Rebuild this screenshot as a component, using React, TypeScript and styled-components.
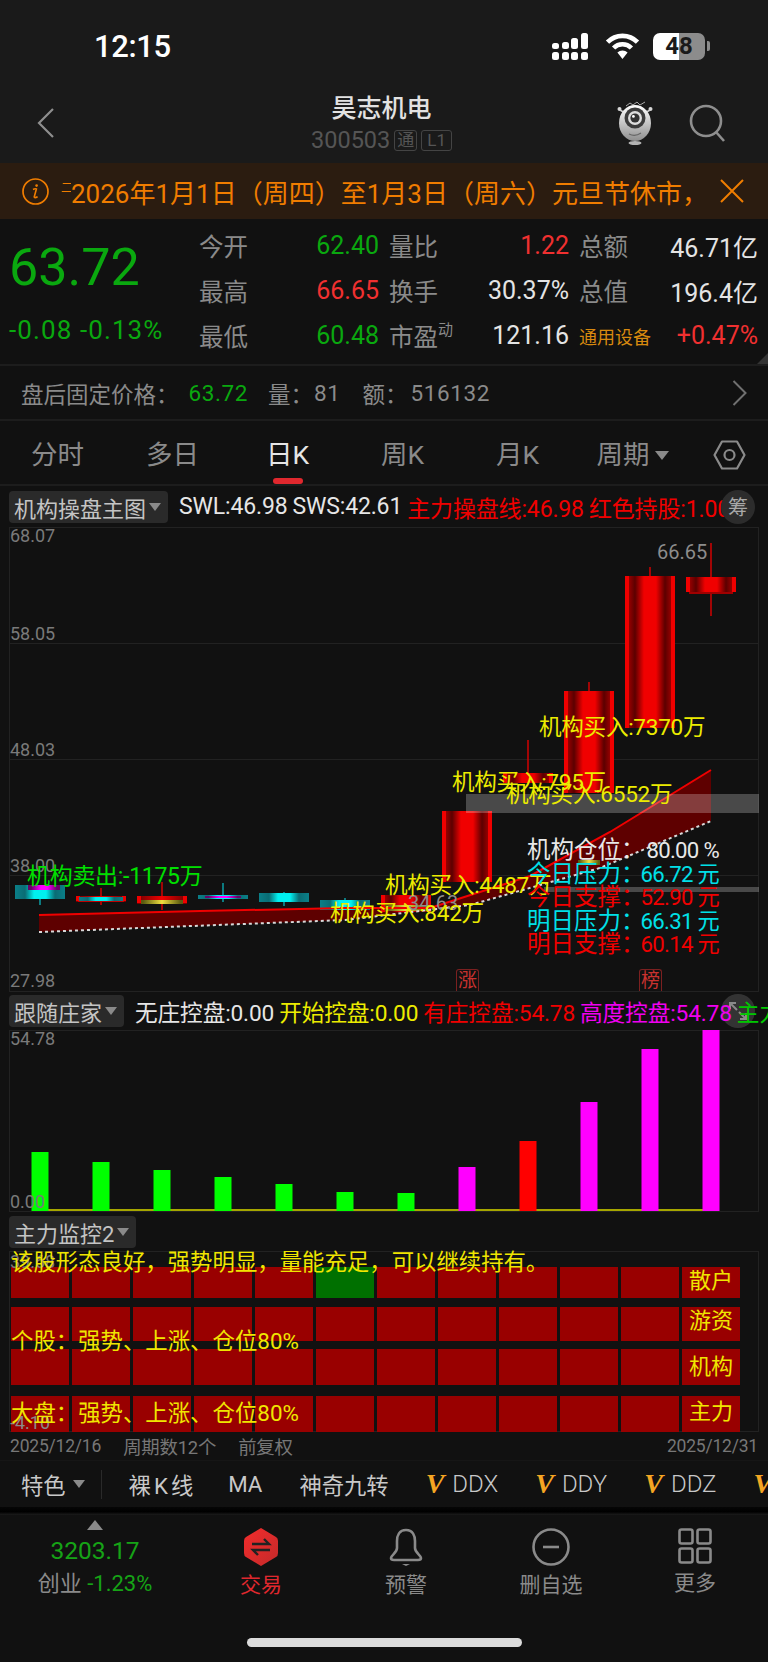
import * as React from 'react';
import styled, { createGlobalStyle } from 'styled-components';

const GlobalStyle = createGlobalStyle`
  html, body {
    margin: 0;
    background: #111111;
    overflow: hidden;
  }
  * {
    box-sizing: border-box;
  }
`;

const Page = styled.div`
  width: 768px;
  height: 1662px;
  background: #111111;
  overflow: hidden;
  font-family: Roboto, 'Noto Sans CJK SC', sans-serif;
  color: #8a8a8a;
  display: flex;
  flex-direction: column;
`;

const Top = styled.div`
  background: #1a1a1a;
  height: 163px;
  flex: none;
`;

const StatusBar = styled.div`
  height: 92px;
  padding: 0 63px 0 94px;
  display: flex;
  align-items: center;
  justify-content: space-between;
`;

const Clock = styled.div`
  color: #fff;
  font-size: 31px;
  font-weight: 500;
  letter-spacing: -0.4px;
`;

const StatusIcons = styled.div`
  display: flex;
  align-items: center;
  gap: 13px;
`;

const Battery = styled.div`
  width: 52px;
  height: 27px;
  border-radius: 7px;
  background: linear-gradient(90deg, #fff 50%, #8c8c8c 50%);
  color: #1a1a1a;
  font-size: 24px;
  font-weight: 700;
  line-height: 27px;
  text-align: center;
  position: relative;
  &::after {
    content: '';
    position: absolute;
    right: -5px;
    top: 8px;
    width: 3px;
    height: 10px;
    border-radius: 0 2px 2px 0;
    background: #8c8c8c;
  }
`;

const Header = styled.div`
  height: 71px;
  display: grid;
  grid-template-columns: 1fr auto 1fr;
  align-items: center;
  padding: 0 42px 9px 37px;
`;

const TitleBox = styled.div`
  display: flex;
  flex-direction: column;
  align-items: center;
  align-self: start;
  padding-top: 2px;
`;

const Title = styled.div`
  color: #e2e2e2;
  font-size: 25px;
  line-height: 30px;
  font-weight: 500;
`;

const Sub = styled.div`
  display: flex;
  align-items: center;
  gap: 4px;
  margin-top: 3px;
  color: #555;
  font-size: 23.5px;
  line-height: 26px;
`;

const SubBadge = styled.span<{ $wide?: boolean }>`
  border: 1px solid #444;
  border-radius: 3px;
  font-size: 17px;
  line-height: 19px;
  padding: 0 ${(p) => (p.$wide ? 5 : 2)}px;
  color: #555;
`;

const HeaderRight = styled.div`
  display: flex;
  justify-content: flex-end;
  align-items: center;
  gap: 36px;
`;

const Banner = styled.div`
  height: 56px;
  flex: none;
  background: #2b1c10;
  color: #f07d00;
  display: flex;
  align-items: center;
  padding: 0 24px 0 22px;
  font-size: 26px;
`;

const BannerClip = styled.span`
  width: 10px;
  margin: -10px 0 0 12px;
  font-size: 12px;
  overflow: hidden;
  flex: none;
`;

const BannerText = styled.span`
  flex: 1;
  white-space: nowrap;
  overflow: hidden;
`;

const Quote = styled.div`
  height: 147px;
  flex: none;
  display: flex;
  border-bottom: 2px solid #1d1d1d;
  position: relative;
`;

const PriceBox = styled.div`
  width: 199px;
  flex: none;
  padding: 19px 0 0 9px;
`;

const Price = styled.div`
  color: #0aa80f;
  font-size: 52px;
  line-height: 60px;
`;

const PriceChange = styled.div`
  margin-top: 17px;
  color: #0aa80f;
  font-size: 26px;
  letter-spacing: 1.1px;
  line-height: 30px;
  white-space: nowrap;
`;

const QuoteGrid = styled.div`
  display: grid;
  grid-template-columns: 50px 130px 60px 130px 60px 129px;
  grid-auto-rows: 45px;
  padding-top: 4px;
  align-items: center;
`;

const QuoteLabel = styled.div<{ $indent?: boolean }>`
  color: #8a8a8a;
  font-size: 24.5px;
  white-space: nowrap;
  padding-left: ${(p) => (p.$indent ? 10 : 0)}px;
`;

const Sup = styled.span`
  font-size: 15px;
  vertical-align: 11px;
  line-height: 0;
`;

const QuoteValue = styled.div<{ $c: string }>`
  color: ${(p) => p.$c};
  font-size: 25px;
  text-align: right;
  white-space: nowrap;
`;

const Sector = styled.div`
  color: #d8890f;
  font-size: 18px;
  padding-left: 10px;
  white-space: nowrap;
`;

const Corner = styled.div`
  position: absolute;
  right: 0;
  bottom: 0;
  width: 0;
  height: 0;
  border-left: 11px solid transparent;
  border-bottom: 11px solid #333;
`;

const AfterRow = styled.div`
  height: 55px;
  flex: none;
  display: flex;
  align-items: center;
  padding: 0 21px 0 21px;
  border-bottom: 2px solid #1d1d1d;
  font-size: 22.5px;
  white-space: nowrap;
`;

const AfterItem = styled.span<{ $c?: string; $gap?: number; $num?: boolean }>`
  color: ${(p) => p.$c || '#8a8a8a'};
  margin-left: ${(p) => p.$gap || 0}px;
  letter-spacing: ${(p) => (p.$num ? 0.6 : 0)}px;
`;

const AfterEnd = styled.span`
  margin-left: auto;
  display: flex;
`;

const Tabs = styled.div`
  height: 65px;
  flex: none;
  display: grid;
  grid-template-columns: repeat(6, 115px) 1fr;
  align-items: center;
  border-bottom: 2px solid #1d1d1d;
  padding-top: 5px;
`;

const Tab = styled.div<{ $active?: boolean }>`
  position: relative;
  text-align: center;
  font-size: 26.5px;
  line-height: 36px;
  color: ${(p) => (p.$active ? '#e6e6e6' : '#8a8a8a')};
  display: flex;
  justify-content: center;
  align-items: center;
  gap: 5px;
  &::after {
    content: '';
    display: ${(p) => (p.$active ? 'block' : 'none')};
    position: absolute;
    left: 43px;
    width: 30px;
    height: 6px;
    top: 41px;
    border-radius: 3px;
    background: #e0282e;
  }
`;

const Caret = styled.i<{ $size?: number }>`
  flex: none;
  width: 0;
  height: 0;
  border-left: ${(p) => p.$size || 6}px solid transparent;
  border-right: ${(p) => p.$size || 6}px solid transparent;
  border-top: ${(p) => (p.$size || 6) + 2}px solid #8a8a8a;
`;

const TabIcon = styled.div`
  display: flex;
  justify-content: center;
`;

const IndicatorRow = styled.div<{ $h: number; $s?: number }>`
  height: ${(p) => p.$h}px;
  flex: none;
  position: relative;
  padding-left: 9px;
  display: flex;
  align-items: center;
  overflow: hidden;
  font-size: ${(p) => p.$s || 22}px;
  white-space: nowrap;
`;

const Picker = styled.div`
  flex: none;
  height: 32px;
  padding: 0 7px 0 5px;
  background: #2a2a2a;
  border-radius: 4px;
  color: #c4c4c4;
  font-size: 22px;
  display: flex;
  align-items: center;
  gap: 3px;
  margin-right: 11px;
`;

const Metric = styled.span<{ $c: string }>`
  position: relative;
  z-index: 1;
  color: ${(p) => p.$c};
  margin-right: 5px;
  letter-spacing: -0.15px;
`;

// the solid button hides the line behind it, the soft one sits under the text
const RoundButton = styled.div<{ $soft?: boolean }>`
  position: absolute;
  z-index: ${(p) => (p.$soft ? 0 : 2)};
  right: 13px;
  top: 50%;
  transform: translateY(-50%);
  width: 34px;
  height: 34px;
  border-radius: 50%;
  background: ${(p) => (p.$soft ? 'rgba(70,70,70,0.65)' : '#2c2c2c')};
  color: #a8a8a8;
  font-size: 20px;
  display: flex;
  align-items: center;
  justify-content: center;
`;

const ChartPanel = styled.div<{ $h: number }>`
  position: relative;
  flex: none;
  margin-left: 9px;
  width: 750px;
  height: ${(p) => p.$h}px;
  border: 1px solid #222;
`;

const ChartSvg = styled.svg`
  position: absolute;
  left: -1px;
  top: -1px;
  display: block;
`;

// $x / $y are page coordinates; $ox / $oy are the origin of the panel it sits in
const Mark = styled.span<{ $x: number; $y: number; $ox?: number; $oy?: number; $c: string; $s?: number }>`
  position: absolute;
  left: ${(p) => p.$x - (p.$ox ?? 9) - 1}px;
  top: ${(p) => p.$y - (p.$oy ?? 527) - 1}px;
  transform: translateY(-50%);
  color: ${(p) => p.$c};
  font-size: ${(p) => p.$s || 23}px;
  line-height: 1.2;
  white-space: nowrap;
  letter-spacing: -0.3px;
`;

const AxisValue = styled(Mark)`
  letter-spacing: 0;
`;

const Stamp = styled.span<{ $x: number }>`
  position: absolute;
  left: ${(p) => p.$x - 10}px;
  bottom: 0;
  width: 23px;
  height: 22px;
  border: 1px solid #7c2020;
  border-bottom: none;
  border-radius: 3px 3px 0 0;
  color: #c8322f;
  font-size: 19px;
  line-height: 22px;
  text-align: center;
  overflow: hidden;
`;

const InfoBlock = styled.div`
  position: absolute;
  left: 517px;
  top: 311px;
  width: 192px;
  font-size: 23.5px;
  line-height: 23.5px;
`;

const InfoRow = styled.div<{ $c: string }>`
  color: ${(p) => p.$c};
  display: grid;
  grid-template-columns: 113px 79px;
  white-space: nowrap;
`;

const InfoValue = styled.span`
  font-size: 22.2px;
  letter-spacing: -0.7px;
  text-align: right;
`;

const MonitorPanel = styled(ChartPanel)`
  padding: 15px 0 0 1px;
`;

const CellRow = styled.div<{ $h: number; $gap: number }>`
  display: flex;
  gap: 3px;
  height: ${(p) => p.$h}px;
  margin-bottom: ${(p) => p.$gap}px;
`;

const Cell = styled.div<{ $green?: boolean; $lift?: number }>`
  width: 58px;
  height: 100%;
  background: ${(p) => (p.$green ? '#007000' : '#990000')};
  color: #f0e600;
  font-size: 22px;
  display: flex;
  justify-content: center;
  align-items: center;
  padding-bottom: ${(p) => p.$lift || 0}px;
`;

const MonitorText = styled(Mark)`
  letter-spacing: 0;
`;

const DateRow = styled.div`
  height: 28px;
  flex: none;
  padding: 0 10px;
  display: flex;
  align-items: center;
  gap: 22px;
  font-size: 17.5px;
  letter-spacing: -0.2px;
  color: #777;
  white-space: nowrap;
`;

const DateTag = styled.span`
  font-size: 18.4px;
`;

const DateEnd = styled.span`
  margin-left: auto;
`;

const ToolRow = styled.div`
  height: 47px;
  flex: none;
  padding-left: 21px;
  display: flex;
  align-items: center;
  gap: 37px;
  color: #c8c8c8;
  font-size: 22.3px;
  white-space: nowrap;
  overflow: hidden;
  border-top: 1px solid #161616;
`;

const ToolLead = styled.div`
  display: flex;
  align-items: center;
  gap: 7px;
  padding-right: 16px;
  margin-right: -10px;
  height: 29px;
  border-right: 1px solid #2a2a2a;
`;

const ToolSpaced = styled.span`
  letter-spacing: 3px;
  margin-right: -5px;
`;

const ToolV = styled.span`
  display: flex;
  align-items: center;
  gap: 8px;
  font-size: 24px;
  font-weight: 300;
`;

const VMark = styled.span`
  color: #f5a623;
  font-family: 'Liberation Serif', serif;
  font-style: italic;
  font-weight: 700;
  font-size: 28px;
`;

const Shelf = styled.div`
  height: 8px;
  flex: none;
  background: linear-gradient(180deg, #060606, #000 60%, #1c1c1c);
`;

const Nav = styled.div`
  flex: 1;
  position: relative;
  display: grid;
  grid-template-columns: 190px 142px 148px 142px 146px;
  align-content: start;
  justify-items: center;
  padding-top: 5px;
`;

const IndexBox = styled.div`
  display: flex;
  flex-direction: column;
  align-items: center;
`;

const IndexUp = styled.i`
  width: 0;
  height: 0;
  border-left: 8px solid transparent;
  border-right: 8px solid transparent;
  border-bottom: 10px solid #8a8a8a;
`;

const IndexValue = styled.div`
  color: #16a316;
  font-size: 24.5px;
  line-height: 30px;
  margin-top: 6px;
`;

const IndexSub = styled.div`
  font-size: 22px;
  line-height: 30px;
  margin-top: 3px;
  white-space: nowrap;
  span {
    color: #16a316;
  }
`;

const NavItem = styled.div<{ $active?: boolean }>`
  display: flex;
  flex-direction: column;
  align-items: center;
  padding-top: 8px;
  color: ${(p) => (p.$active ? '#e0282e' : '#8a8a8a')};
  font-size: 21px;
  line-height: 30px;
  svg {
    display: block;
    margin-bottom: 4px;
  }
`;

const HomeBar = styled.div`
  position: absolute;
  left: 247px;
  top: 123px;
  width: 275px;
  height: 9px;
  border-radius: 5px;
  background: #dcdcdc;
`;

const Signal = () => (
  <svg width="40" height="27" viewBox="0 0 40 27" fill="#fff">
    {[0, 10, 19, 29].map((x) => (
      <rect key={x} x={x} y="19" width="7" height="8" rx="2.5" />
    ))}
    <rect x="0" y="10" width="7" height="6" rx="2.5" />
    <rect x="10" y="9" width="7" height="7" rx="2.5" />
    <rect x="19" y="5" width="7" height="11" rx="2.5" />
    <rect x="29" y="0" width="7" height="16" rx="2.5" />
  </svg>
);

const Wifi = () => (
  <svg width="35" height="26" viewBox="0 0 35 26">
    <g fill="none" stroke="#fff" strokeWidth="4.6">
      <path d="M2.5 9.2 a21 21 0 0 1 30 0" />
      <path d="M8.6 15 a12.5 12.5 0 0 1 17.8 0" />
    </g>
    <path d="M17.5 26 L12.4 19.6 a7.5 7.5 0 0 1 10.2 0 Z" fill="#fff" />
  </svg>
);

const Back = () => (
  <svg width="18" height="30" viewBox="0 0 18 30" fill="none" stroke="#8e8e8e" strokeWidth="2.2">
    <path d="M16 1 L2 15 L16 29" />
  </svg>
);

const Mascot = () => (
  <svg width="36" height="44" viewBox="0 0 36 44">
    <defs>
      <linearGradient id="mascotBody" x1="0" y1="0" x2="0" y2="1">
        <stop offset="0" stopColor="#ffffff" />
        <stop offset="1" stopColor="#8e8e8e" />
      </linearGradient>
    </defs>
    <path d="M9 5 L13 2 L16 4 L20 1 L23 4 L28 1" fill="none" stroke="#aaa" strokeWidth="1" />
    <g fill="#d8d8d8">
      <circle cx="2.5" cy="8" r="2" />
      <circle cx="33.5" cy="8" r="2" />
    </g>
    <path d="M3 9 L8 12 M33 9 L28 12" stroke="#ccc" strokeWidth="1.6" />
    <ellipse cx="18" cy="22" rx="16" ry="18" fill="url(#mascotBody)" />
    <circle cx="18" cy="17" r="10.5" fill="#3c3c3c" />
    <circle cx="18" cy="17" r="7" fill="#ddd" />
    <circle cx="18" cy="17" r="4.6" fill="#333" />
    <circle cx="16.4" cy="15.4" r="1.4" fill="#fff" />
    <path d="M12 33 Q18 36 24 32" fill="none" stroke="#666" strokeWidth="1.2" />
    <ellipse cx="18" cy="42" rx="6.5" ry="2" fill="#b4b4b4" />
  </svg>
);

const Search = () => (
  <svg width="37" height="38" viewBox="0 0 37 38" fill="none" stroke="#8e8e8e" strokeWidth="2.6">
    <circle cx="17" cy="17" r="15" />
    <path d="M27 28 L35 37" />
  </svg>
);

const InfoIcon = () => (
  <svg width="27" height="27" viewBox="0 0 27 27" fill="none" stroke="#f07d00" strokeWidth="1.7">
    <circle cx="13.5" cy="13.5" r="12.5" />
    <circle cx="14.6" cy="7.6" r="1.3" fill="#f07d00" stroke="none" />
    <path d="M11 11.5 Q13 10.4 14.4 11 L12.2 19 Q12.4 20.4 15.6 18.8" strokeWidth="1.6" />
  </svg>
);

const CloseIcon = () => (
  <svg width="24" height="24" viewBox="0 0 24 24" fill="none" stroke="#f07d00" strokeWidth="2">
    <path d="M1 1 L23 23 M23 1 L1 23" />
  </svg>
);

const NextIcon = () => (
  <svg width="15" height="26" viewBox="0 0 15 26" fill="none" stroke="#707070" strokeWidth="2">
    <path d="M1.5 1 L13.5 13 L1.5 25" />
  </svg>
);

const SettingsIcon = () => (
  <svg width="33" height="30" viewBox="0 0 33 30" fill="none" stroke="#8a8a8a" strokeWidth="2.2">
    <path d="M9 1.5 H24 L31.5 15 L24 28.5 H9 L1.5 15 Z" strokeLinejoin="round" />
    <circle cx="16.5" cy="15" r="5" />
  </svg>
);

const ExpandIcon = () => (
  <svg width="22" height="22" viewBox="0 0 22 22" fill="none" stroke="#8a8a8a" strokeWidth="2">
    <path d="M3 9 V3 H9 M3 3 L10 10 M19 13 V19 H13 M19 19 L12 12" />
  </svg>
);

const TradeIcon = () => (
  <svg width="34" height="38" viewBox="0 0 34 38">
    <defs>
      <linearGradient id="tradeFill" x1="0" y1="0" x2="1" y2="1">
        <stop offset="0" stopColor="#f42c2c" />
        <stop offset="1" stopColor="#c32a2a" />
      </linearGradient>
    </defs>
    <path d="M17 0 L32 9 Q34 10 34 13 V25 Q34 28 32 29 L17 38 L2 29 Q0 28 0 25 V13 Q0 10 2 9 Z" fill="url(#tradeFill)" />
    <path d="M8 16 H25 L20 11 M26 22 H9 L14 27" fill="none" stroke="#222" strokeWidth="2.4" />
  </svg>
);

const BellIcon = () => (
  <svg width="34" height="38" viewBox="0 0 34 38" fill="none" stroke="#8a8a8a" strokeWidth="2.6">
    <path d="M17 2 C10 2 8 8 8 13 V20 C8 25 2 27 2 30 Q2 32 5 32 H29 Q32 32 32 30 C32 27 26 25 26 20 V13 C26 8 24 2 17 2 Z" />
    <path d="M13 36 H21 L17 38 Z" fill="#8a8a8a" stroke="none" />
  </svg>
);

const RemoveIcon = () => (
  <svg width="38" height="38" viewBox="0 0 38 38" fill="none" stroke="#8a8a8a" strokeWidth="2.6">
    <circle cx="19" cy="19" r="17.5" />
    <path d="M11 19 H27" />
  </svg>
);

const MoreIcon = () => (
  <svg width="34" height="36" viewBox="0 0 34 36" fill="none" stroke="#8a8a8a" strokeWidth="2.6">
    <rect x="1.5" y="1.5" width="13" height="14" rx="2" />
    <rect x="19.5" y="1.5" width="13" height="14" rx="2" />
    <rect x="1.5" y="20.5" width="13" height="14" rx="2" />
    <rect x="19.5" y="20.5" width="13" height="14" rx="2" />
  </svg>
);

type Candle = { x: number; top: number; bottom: number; high: number; low: number; fill: string; wick: string };

const candles: Candle[] = [
  { x: 40, top: 885, bottom: 899, high: 885, low: 905, fill: 'cyan', wick: '#0aa8b0' },
  { x: 101, top: 896, bottom: 902, high: 888, low: 905, fill: 'hollow', wick: '#e00000' },
  { x: 162, top: 896, bottom: 904, high: 882, low: 910, fill: 'hollow', wick: '#e00000' },
  { x: 223, top: 895, bottom: 899, high: 883, low: 902, fill: 'cyan', wick: '#0aa8b0' },
  { x: 284, top: 893, bottom: 902, high: 892, low: 906, fill: 'cyan', wick: '#0aa8b0' },
  { x: 345, top: 900, bottom: 910, high: 898, low: 910, fill: 'cyan', wick: '#0aa8b0' },
  { x: 406, top: 895, bottom: 912, high: 893, low: 914, fill: 'red', wick: '#e00000' },
  { x: 467, top: 811, bottom: 882, high: 811, low: 882, fill: 'red', wick: '#e00000' },
  { x: 528, top: 773, bottom: 783, high: 740, low: 783, fill: 'red', wick: '#e00000' },
  { x: 589, top: 691, bottom: 793, high: 682, low: 793, fill: 'red', wick: '#e00000' },
  { x: 650, top: 576, bottom: 728, high: 567, low: 728, fill: 'red', wick: '#e00000' },
  { x: 711, top: 577, bottom: 592, high: 543, low: 616, fill: 'red', wick: '#e00000' },
];

const candleFill = (c: Candle) =>
  c.fill === 'cyan' ? 'url(#candleCyan)' : c.fill === 'red' ? 'url(#candleRed)' : 'url(#candleHollow)';

const MainChart = () => (
  <ChartSvg width="750" height="465" viewBox="9 527 750 465">
    <defs>
      <linearGradient id="candleRed">
        <stop offset="0" stopColor="#f00000" />
        <stop offset="0.075" stopColor="#f00000" />
        <stop offset="0.09" stopColor="#900000" />
        <stop offset="0.2" stopColor="#5c0000" />
        <stop offset="0.38" stopColor="#f00000" />
        <stop offset="0.62" stopColor="#f00000" />
        <stop offset="0.8" stopColor="#5c0000" />
        <stop offset="0.91" stopColor="#900000" />
        <stop offset="0.925" stopColor="#f00000" />
        <stop offset="1" stopColor="#f00000" />
      </linearGradient>
      <linearGradient id="candleCyan">
        <stop offset="0" stopColor="#0a7f88" />
        <stop offset="0.2" stopColor="#0a6c74" />
        <stop offset="0.38" stopColor="#00f0f0" />
        <stop offset="0.62" stopColor="#00f0f0" />
        <stop offset="0.8" stopColor="#0a6c74" />
        <stop offset="1" stopColor="#0a7f88" />
      </linearGradient>
      <linearGradient id="candleHollow">
        <stop offset="0" stopColor="#700000" />
        <stop offset="0.5" stopColor="#f00000" />
        <stop offset="1" stopColor="#700000" />
      </linearGradient>
      <linearGradient id="candleMagenta">
        <stop offset="0.1" stopColor="#6a006a" />
        <stop offset="0.4" stopColor="#ff00ff" />
        <stop offset="0.6" stopColor="#ff00ff" />
        <stop offset="0.9" stopColor="#6a006a" />
      </linearGradient>
      <linearGradient id="candleGold">
        <stop offset="0.05" stopColor="#5a5a10" />
        <stop offset="0.5" stopColor="#f0e040" />
        <stop offset="0.95" stopColor="#5a5a10" />
      </linearGradient>
    </defs>

    <g stroke="#222" strokeWidth="1">
      <line x1="9" y1="643.5" x2="759" y2="643.5" />
      <line x1="9" y1="759.5" x2="759" y2="759.5" />
      <line x1="9" y1="875.5" x2="759" y2="875.5" />
    </g>

    <polygon
      points="39,915 200,911 345,908 430,908 530,876 610,832 711,770 711,821 600,868 470,905 345,920 39,932"
      fill="#5e0000"
    />

    {candles.map((c) => (
      <g key={c.x}>
        <line x1={c.x} y1={c.high} x2={c.x} y2={c.low} stroke={c.wick} strokeWidth="1.4" />
        <rect x={c.x - 25} y={c.top} width="50" height={c.bottom - c.top} fill={candleFill(c)} />
      </g>
    ))}

    {/* small candles that carry more than one colour */}
    <rect x="28" y="885" width="32" height="5" fill="url(#candleMagenta)" />
    <rect x="76" y="896" width="4" height="5" fill="#f00000" />
    <rect x="122" y="896" width="4" height="5" fill="#f00000" />
    <rect x="79" y="897" width="44" height="4" fill="url(#candleCyan)" />
    <rect x="78" y="901" width="46" height="1" fill="#c00000" />
    <rect x="137" y="896" width="4" height="7" fill="#f00000" />
    <rect x="183" y="896" width="4" height="7" fill="#f00000" />
    <rect x="141" y="900" width="42" height="4" fill="url(#candleGold)" />
    <rect x="205" y="896" width="36" height="2" fill="url(#candleMagenta)" />
    <rect x="385" y="905" width="42" height="6" fill="url(#candleGold)" />
    <rect x="689" y="592" width="44" height="2" fill="#a00000" />

    <polyline
      points="39,915 200,911 345,908 430,908 530,876 610,832 711,770"
      fill="none"
      stroke="#f00000"
      strokeWidth="2"
    />
    <polyline
      points="39,932 345,920 470,905 600,868 711,821"
      fill="none"
      stroke="#d8d8d8"
      strokeWidth="2"
      strokeDasharray="3 3"
    />

    <rect x="466" y="794" width="293" height="19" fill="#ffffff" fillOpacity="0.24" />
    <rect x="544" y="887" width="215" height="5" fill="#ffffff" fillOpacity="0.24" />
    <rect x="578" y="860" width="22" height="5" fill="url(#candleGold)" />
  </ChartSvg>
);

const bars: { x: number; top: number; c: string }[] = [
  { x: 40, top: 1152, c: '#00ff00' },
  { x: 101, top: 1162, c: '#00ff00' },
  { x: 162, top: 1170, c: '#00ff00' },
  { x: 223, top: 1177, c: '#00ff00' },
  { x: 284, top: 1184, c: '#00ff00' },
  { x: 345, top: 1192, c: '#00ff00' },
  { x: 406, top: 1193, c: '#00ff00' },
  { x: 467, top: 1167, c: '#ff00ff' },
  { x: 528, top: 1141, c: '#ff0000' },
  { x: 589, top: 1102, c: '#ff00ff' },
  { x: 650, top: 1049, c: '#ff00ff' },
  { x: 711, top: 1030, c: '#ff00ff' },
];

const BarChart = () => (
  <ChartSvg width="750" height="182" viewBox="9 1030 750 182">
    <rect x="39" y="1209" width="680" height="2" fill="#a6a600" />
    {bars.map((b) => (
      <rect key={b.x} x={b.x - 8.5} y={b.top} width="17" height={1211 - b.top} fill={b.c} />
    ))}
  </ChartSvg>
);

const buys: [number, number, string][] = [
  [539, 728, '机构买入:7370万'],
  [452, 783, '机构买入:795万'],
  [506, 795, '机构买入:6552万'],
  [385, 886, '机构买入:4487万'],
  [330, 914, '机构买入:842万'],
];

const monitorRows: [number, number, number, string][] = [
  [31, 9, 10, '散户'],
  [34, 8, 12, '游资'],
  [36, 11, 6, '机构'],
  [36, 0, 10, '主力'],
];

const infoRows: [string, string, string][] = [
  ['#e8e8e8', '机构仓位：', '80.00 %'],
  ['#00e0e8', '今日压力：', '66.72 元'],
  ['#f00000', '今日支撑：', '52.90 元'],
  ['#00e0e8', '明日压力：', '66.31 元'],
  ['#f00000', '明日支撑：', '60.14 元'],
];

export default function App() {
  return (
    <Page>
      <GlobalStyle />
      <Top>
        <StatusBar>
          <Clock>12:15</Clock>
          <StatusIcons>
            <Signal />
            <Wifi />
            <Battery>48</Battery>
          </StatusIcons>
        </StatusBar>
        <Header>
          <Back />
          <TitleBox>
            <Title>昊志机电</Title>
            <Sub>
              300503
              <SubBadge>通</SubBadge>
              <SubBadge $wide>L1</SubBadge>
            </Sub>
          </TitleBox>
          <HeaderRight>
            <Mascot />
            <Search />
          </HeaderRight>
        </Header>
      </Top>

      <Banner>
        <InfoIcon />
        <BannerClip>二</BannerClip>
        <BannerText>2026年1月1日（周四）至1月3日（周六）元旦节休市，</BannerText>
        <CloseIcon />
      </Banner>

      <Quote>
        <PriceBox>
          <Price>63.72</Price>
          <PriceChange>-0.08 -0.13%</PriceChange>
        </PriceBox>
        <QuoteGrid>
          <QuoteLabel>今开</QuoteLabel>
          <QuoteValue $c="#0aa80f">62.40</QuoteValue>
          <QuoteLabel $indent>量比</QuoteLabel>
          <QuoteValue $c="#f03030">1.22</QuoteValue>
          <QuoteLabel $indent>总额</QuoteLabel>
          <QuoteValue $c="#e4e4e4">46.71亿</QuoteValue>
          <QuoteLabel>最高</QuoteLabel>
          <QuoteValue $c="#f03030">66.65</QuoteValue>
          <QuoteLabel $indent>换手</QuoteLabel>
          <QuoteValue $c="#e4e4e4">30.37%</QuoteValue>
          <QuoteLabel $indent>总值</QuoteLabel>
          <QuoteValue $c="#e4e4e4">196.4亿</QuoteValue>
          <QuoteLabel>最低</QuoteLabel>
          <QuoteValue $c="#0aa80f">60.48</QuoteValue>
          <QuoteLabel $indent>
            市盈<Sup>动</Sup>
          </QuoteLabel>
          <QuoteValue $c="#e4e4e4">121.16</QuoteValue>
          <Sector>通用设备</Sector>
          <QuoteValue $c="#f03030">+0.47%</QuoteValue>
        </QuoteGrid>
        <Corner />
      </Quote>

      <AfterRow>
        <AfterItem>盘后固定价格：</AfterItem>
        <AfterItem $c="#0aa80f" $gap={10} $num>
          63.72
        </AfterItem>
        <AfterItem $gap={20}>量：</AfterItem>
        <AfterItem $gap={1} $num>81</AfterItem>
        <AfterItem $gap={22}>额：</AfterItem>
        <AfterItem $gap={3} $num>516132</AfterItem>
        <AfterEnd>
          <NextIcon />
        </AfterEnd>
      </AfterRow>

      <Tabs>
        <Tab>分时</Tab>
        <Tab>多日</Tab>
        <Tab $active>日K</Tab>
        <Tab>周K</Tab>
        <Tab>月K</Tab>
        <Tab>
          周期
          <Caret $size={7} />
        </Tab>
        <TabIcon>
          <SettingsIcon />
        </TabIcon>
      </Tabs>

      <IndicatorRow $h={41} $s={23}>
        <Picker>
          机构操盘主图
          <Caret />
        </Picker>
        <Metric $c="#e6e6e6">SWL:46.98</Metric>
        <Metric $c="#e6e6e6">SWS:42.61</Metric>
        <Metric $c="#f00000">主力操盘线:46.98</Metric>
        <Metric $c="#f00000">红色持股:1.00</Metric>
        <RoundButton>筹</RoundButton>
      </IndicatorRow>

      <ChartPanel $h={465}>
        <MainChart />
        <AxisValue $x={10} $y={536} $c="#7a7a7a" $s={18}>68.07</AxisValue>
        <AxisValue $x={10} $y={634} $c="#7a7a7a" $s={18}>58.05</AxisValue>
        <AxisValue $x={10} $y={750} $c="#7a7a7a" $s={18}>48.03</AxisValue>
        <AxisValue $x={10} $y={866} $c="#7a7a7a" $s={18}>38.00</AxisValue>
        <AxisValue $x={10} $y={981} $c="#7a7a7a" $s={18}>27.98</AxisValue>
        <AxisValue $x={657} $y={552} $c="#8c8c8c" $s={20}>66.65</AxisValue>
        <AxisValue $x={408} $y={903} $c="#8c8c8c" $s={20}>34.63</AxisValue>
        {buys.map(([x, y, text]) => (
          <Mark key={text} $x={x} $y={y} $c="#ecec00" $s={22.6}>
            {text}
          </Mark>
        ))}
        <Mark $x={27} $y={877} $c="#00e000">机构卖出:-1175万</Mark>
        <InfoBlock>
          {infoRows.map(([c, label, value]) => (
            <InfoRow key={label} $c={c}>
              <span>{label}</span>
              <InfoValue>{value}</InfoValue>
            </InfoRow>
          ))}
        </InfoBlock>
        <Stamp $x={456}>涨</Stamp>
        <Stamp $x={639}>榜</Stamp>
      </ChartPanel>

      <IndicatorRow $h={38} $s={22.7}>
        <Picker>
          跟随庄家
          <Caret />
        </Picker>
        <Metric $c="#e6e6e6">无庄控盘:0.00</Metric>
        <Metric $c="#ecec00">开始控盘:0.00</Metric>
        <Metric $c="#f00000">有庄控盘:54.78</Metric>
        <Metric $c="#f000f0">高度控盘:54.78</Metric>
        <Metric $c="#00c800">主力</Metric>
        <RoundButton $soft>
          <ExpandIcon />
        </RoundButton>
      </IndicatorRow>

      <ChartPanel $h={182}>
        <BarChart />
        <AxisValue $x={10} $y={1039} $oy={1030} $c="#7a7a7a" $s={18}>54.78</AxisValue>
        <AxisValue $x={10} $y={1202} $oy={1030} $c="#7a7a7a" $s={18}>0.00</AxisValue>
      </ChartPanel>

      <IndicatorRow $h={39}>
        <Picker>
          主力监控2
          <Caret />
        </Picker>
      </IndicatorRow>

      <MonitorPanel $h={181}>
        {monitorRows.map(([h, gap, lift, name], row) => (
          <CellRow key={name} $h={h} $gap={gap}>
            {Array.from({ length: 11 }, (_, i) => (
              <Cell key={i} $green={row === 0 && i === 5} />
            ))}
            <Cell $lift={lift}>{name}</Cell>
          </CellRow>
        ))}
        <AxisValue $x={10} $y={1262} $oy={1251} $c="#7a7a7a" $s={18}>39.68</AxisValue>
        <AxisValue $x={10} $y={1423} $oy={1251} $c="#8a8a8a" $s={18}>-4.10</AxisValue>
        <MonitorText $x={11} $y={1262} $oy={1251} $c="#f0e600" $s={22.4}>该股形态良好，强势明显，量能充足，可以继续持有。</MonitorText>
        <MonitorText $x={11} $y={1341} $oy={1251} $c="#f0e600" $s={22.4}>个股：强势、上涨、仓位80%</MonitorText>
        <MonitorText $x={11} $y={1413} $oy={1251} $c="#f0e600" $s={22.4}>大盘：强势、上涨、仓位80%</MonitorText>
      </MonitorPanel>

      <DateRow>
        <span>2025/12/16</span>
        <DateTag>周期数12个</DateTag>
        <DateTag>前复权</DateTag>
        <DateEnd>2025/12/31</DateEnd>
      </DateRow>

      <ToolRow>
        <ToolLead>
          特色
          <Caret />
        </ToolLead>
        <ToolSpaced>裸K线</ToolSpaced>
        <span>MA</span>
        <span>神奇九转</span>
        <ToolV><VMark>V</VMark>DDX</ToolV>
        <ToolV><VMark>V</VMark>DDY</ToolV>
        <ToolV><VMark>V</VMark>DDZ</ToolV>
        <ToolV><VMark>V</VMark></ToolV>
      </ToolRow>

      <Shelf />

      <Nav>
        <IndexBox>
          <IndexUp />
          <IndexValue>3203.17</IndexValue>
          <IndexSub>
            创业 <span>-1.23%</span>
          </IndexSub>
        </IndexBox>
        <NavItem $active>
          <TradeIcon />
          交易
        </NavItem>
        <NavItem>
          <BellIcon />
          预警
        </NavItem>
        <NavItem>
          <RemoveIcon />
          删自选
        </NavItem>
        <NavItem>
          <MoreIcon />
          更多
        </NavItem>
        <HomeBar />
      </Nav>
    </Page>
  );
}
